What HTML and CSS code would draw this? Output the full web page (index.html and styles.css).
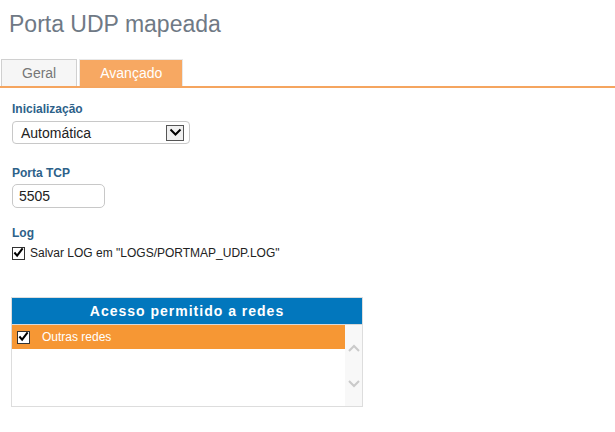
FILE: index.html
```html
<!DOCTYPE html>
<html lang="pt">
<head>
  <meta charset="UTF-8" />
  <title>Porta UDP mapeada</title>
  <link rel="stylesheet" href="styles.css">
</head>
<body>

  <h1 class="title">Porta UDP mapeada</h1>

  <ul class="tabs">
    <li class="tab">Geral</li>
    <li class="tab active">Avançado</li>
  </ul>

  <div class="panel">
    <div class="field field-select">
      <label class="label">Inicialização</label>
      <div class="select">
        <span>Automática</span>
        <span class="select-btn">
          <svg width="13" height="9" viewBox="0 0 13 9"><path d="M1.5 1.5 L6.5 6.5 L11.5 1.5" fill="none" stroke="#000" stroke-width="2"/></svg>
        </span>
      </div>
    </div>

    <div class="field field-port">
      <label class="label">Porta TCP</label>
      <div class="input">5505</div>
    </div>

    <div class="field">
      <label class="label">Log</label>
      <div class="check-line">
        <span class="check"><svg width="12" height="11" viewBox="0 0 12 11"><path d="M1.5 5.5 L4.5 9 L10.5 1" fill="none" stroke="#000" stroke-width="2.2"/></svg></span>
        Salvar LOG em "LOGS/PORTMAP_UDP.LOG"
      </div>
    </div>

    <div class="nets">
      <div class="nets-head">Acesso permitido a redes</div>
      <div class="nets-body">
        <div class="nets-list">
          <div class="net-row">
            <span class="check"><svg width="12" height="11" viewBox="0 0 12 11"><path d="M1.5 5.5 L4.5 9 L10.5 1" fill="none" stroke="#000" stroke-width="2.2"/></svg></span>
            <span class="net-name">Outras redes</span>
          </div>
        </div>
        <div class="scroll">
          <svg width="12" height="8" viewBox="0 0 12 8"><path d="M1 7 L6 2 L11 7" fill="none" stroke="#cacaca" stroke-width="2"/></svg>
          <svg width="12" height="8" viewBox="0 0 12 8"><path d="M1 1 L6 6 L11 1" fill="none" stroke="#cacaca" stroke-width="2"/></svg>
        </div>
      </div>
    </div>
  </div>

</body>
</html>
```

FILE: styles.css
```css
body {
  margin: 0;
  font-family: 'Liberation Sans', Arial, sans-serif;
  background-color: #fff;
  color: #333;
}
.title {
  margin: 0;
  padding: 11px 0 0 9px;
  height: 48px;
  font-size: 23px;
  font-weight: normal;
  color: #6f7985;
  box-sizing: border-box;
}
.tabs {
  list-style: none;
  display: flex;
  gap: 2px;
  margin: 11px 0 0 0;
  padding: 0 0 0 1px;
  border-bottom: 2px solid #f5a55f;
}
.tab {
  height: 27px;
  line-height: 27px;
  padding: 0 20px;
  font-size: 14px;
  color: #777;
  background-color: #f6f6f6;
  border: 1px solid #d0d0d0;
  border-bottom: none;
  box-sizing: border-box;
}
.tab.active {
  color: #fff;
  background-color: #f7a862;
  border-color: #e8e8e8;
}
.panel {
  padding: 14px 0 0 12px;
}
.field-select {
  margin-bottom: 22px;
}
.field-port {
  margin-bottom: 18px;
}
.label {
  display: block;
  font-size: 12px;
  font-weight: bold;
  color: #2d6189;
  margin-bottom: 5px;
}
.field-port .label {
  margin-bottom: 4px;
}
.select {
  display: flex;
  align-items: center;
  justify-content: space-between;
  width: 178px;
  height: 23px;
  padding: 0 5px 0 8px;
  border: 1px solid #c8c8c8;
  border-radius: 4px;
  font-size: 14px;
  color: #222;
  box-sizing: border-box;
}
.select-btn {
  display: flex;
  align-items: center;
  justify-content: center;
  width: 18px;
  height: 16px;
  border: 1px solid #555;
  background-color: #f0f0f0;
  box-sizing: border-box;
}
.input {
  width: 93px;
  height: 24px;
  line-height: 22px;
  padding: 0 6px;
  border: 1px solid #c8c8c8;
  border-radius: 5px;
  font-size: 14px;
  color: #222;
  box-sizing: border-box;
}
.check-line {
  display: flex;
  align-items: center;
  gap: 5px;
  height: 16px;
  font-size: 12px;
  color: #222;
}
.check {
  display: inline-flex;
  align-items: center;
  justify-content: center;
  width: 13px;
  height: 13px;
  border: 1px solid #333;
  background-color: #fff;
  box-sizing: border-box;
}
.check svg {
  margin-top: -2px;
}
.nets {
  width: 350px;
  margin: 36px 0 0 -1px;
  border: 1px solid #ddd;
}
.nets-head {
  height: 26px;
  line-height: 26px;
  text-align: center;
  font-size: 14px;
  font-weight: bold;
  letter-spacing: 1px;
  color: #fff;
  background-color: #0277bd;
  border-bottom: 1px solid #d8d8d8;
}
.nets-body {
  display: flex;
  height: 81px;
}
.nets-list {
  flex: 1;
}
.net-row {
  display: flex;
  align-items: center;
  height: 24px;
  padding-left: 5px;
  background-color: #f69734;
  font-size: 12px;
  color: #fff;
}
.net-name {
  margin-left: 12px;
}
.scroll {
  width: 17px;
  display: flex;
  flex-direction: column;
  align-items: center;
  justify-content: space-between;
  padding: 19px 0 18px;
  background-color: #f8f8f8;
  box-sizing: border-box;
}
```
